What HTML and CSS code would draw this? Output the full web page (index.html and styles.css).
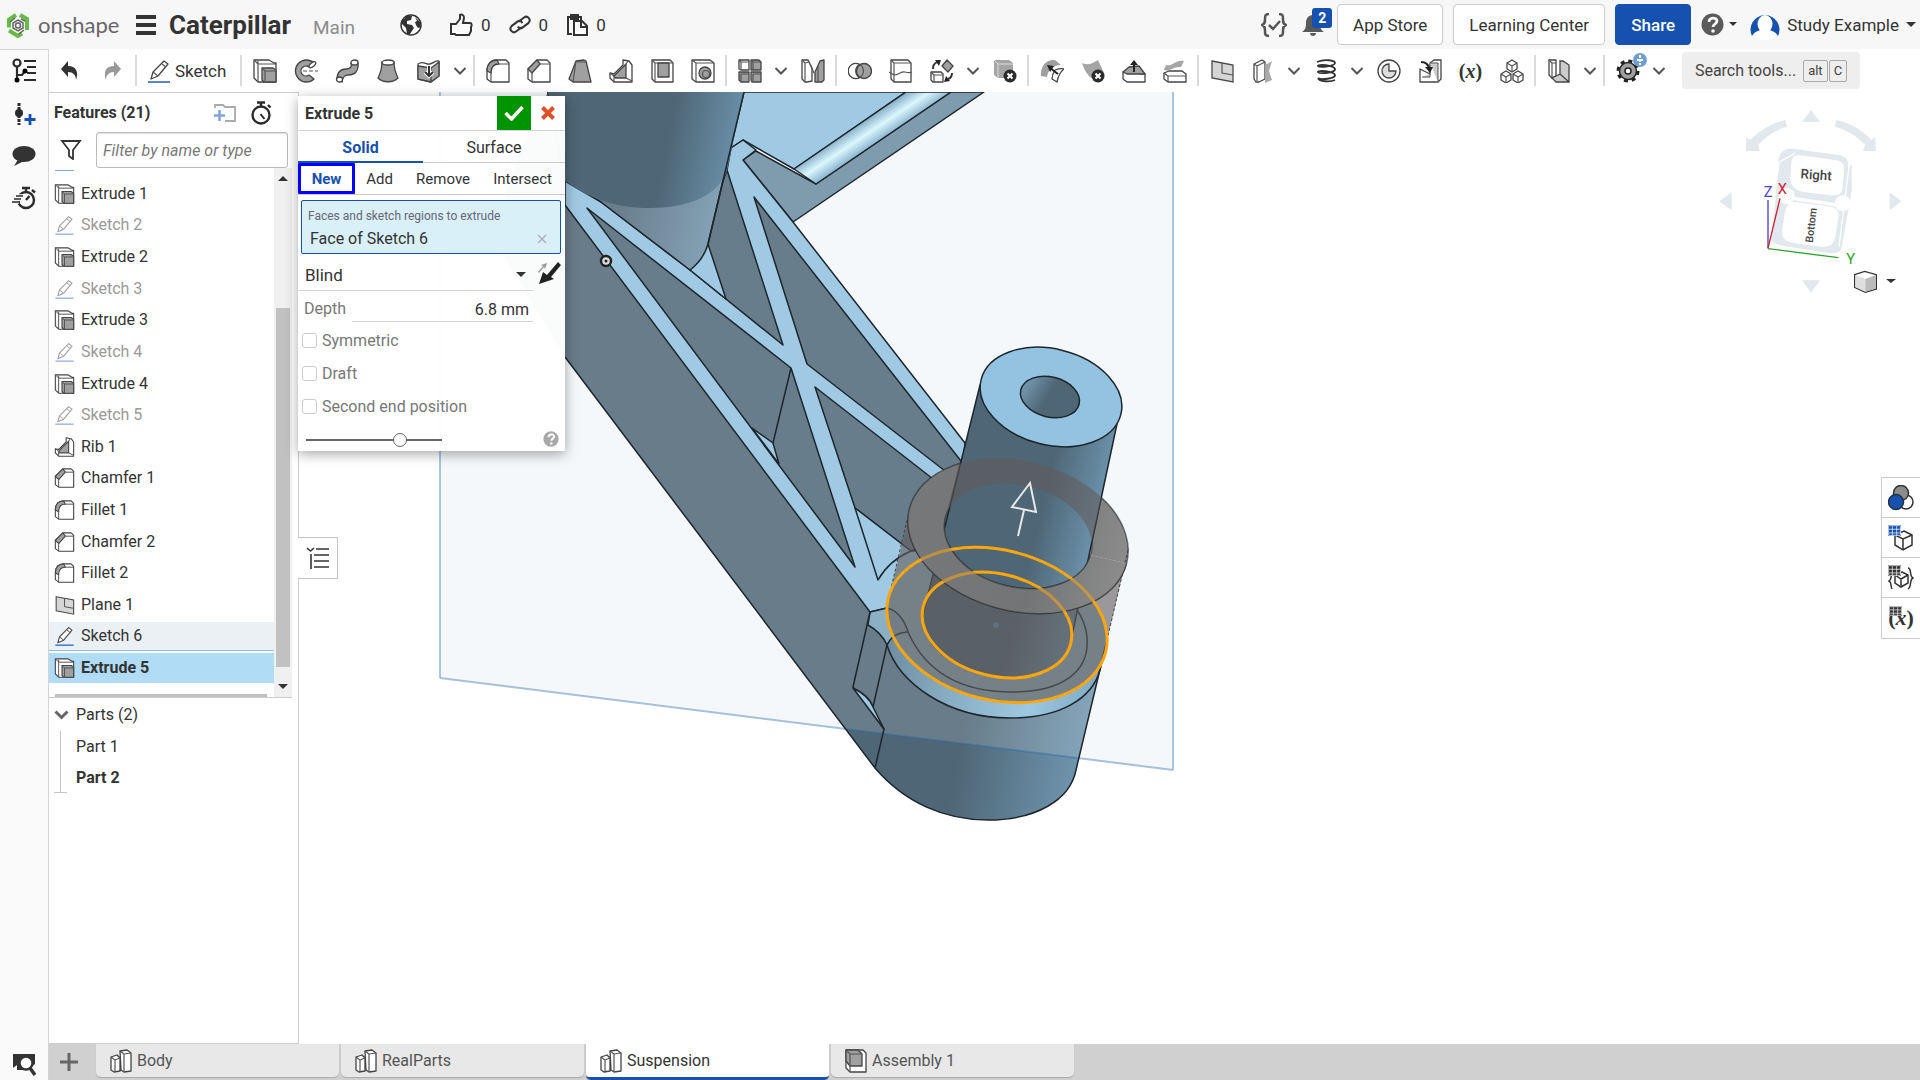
FILE: index.html
```html
<!DOCTYPE html>
<html lang="en">
<head>
<meta charset="utf-8">
<title>Caterpillar | Suspension</title>
<meta name="viewport" content="width=device-width, initial-scale=1">
<link rel="stylesheet" href="styles.css">
</head>
<body>
<svg class="sprite" aria-hidden="true">
  <symbol id="i-extrude" viewBox="0 0 24 24"><path class="w" d="M1 1h15l5 3h2v19H5l-4-4z"/><path class="l" d="M1 1l4 4v18M5 5h18M5 5V2"/><path class="g" d="M9 9h11l3 2v12H11l-2-2z"/><path class="l" d="M9 9l3 3h11M12 12v11"/></symbol>
  <symbol id="i-sketch" viewBox="0 0 24 24"><path class="w" d="M4 20l2-7L17 2l4 3L11 17z"/><path class="l" d="M6 13l5 4M15 5l4 3"/><path d="M1 23h22" stroke="#2f66c0" stroke-width="1.6"/></symbol>
  <symbol id="i-fillet" viewBox="0 0 24 24"><path class="w" d="M1 12C1 5 5 1 11 1h9l3 3v19H5l-4-3z"/><path class="g" d="M1 12C1 5 5 1 11 1l2 4c-5 0-8 3-8 9z"/><path class="l" d="M13 5h10M5 13v10"/></symbol>
  <symbol id="i-chamfer" viewBox="0 0 24 24"><path class="w" d="M1 10l9-9h10l3 3v19H5l-4-3z"/><path class="g" d="M1 10l9-9 3 4-8 9z"/><path class="l" d="M13 5h10M5 13v10"/></symbol>
  <symbol id="i-draft" viewBox="0 0 24 24"><path class="g" d="M8 2l8-1 2 1 5 21H5l-4-3z"/><path class="l" d="M8 2L5 23M8 2l2 1h8"/></symbol>
  <symbol id="i-rib" viewBox="0 0 24 24"><path class="w" d="M14 1l6 1 3 4v17H5l-4-4v-5l4 1 9-9z"/><path class="g" d="M5 17L17 5v14H6z"/><path class="l" d="M1 14l4 3v6M17 5l2-3M17 19l6 3"/></symbol>
  <symbol id="i-plane" viewBox="0 0 24 24"><path d="M2 2l21 4v17L2 19z" fill="#d6d6d6" stroke="#4a4a4a" stroke-width="1.3"/><path class="l" d="M12 4v10l11 2"/></symbol>
  <symbol id="i-shell" viewBox="0 0 24 24"><path class="w" d="M2 1h18l3 3v19H5l-3-3z"/><path class="l" d="M2 1l3 3v19M5 4h18"/><path class="g" d="M8 4h11v14H8z"/></symbol>
  <symbol id="i-hole" viewBox="0 0 24 24"><path class="w" d="M1 1h18l4 3v19H5l-4-3z"/><path class="l" d="M1 1l4 3v19M5 4h18"/><circle class="g" cx="14" cy="14" r="6"/><circle class="l" cx="15" cy="15" r="3.5"/></symbol>
  <symbol id="i-revolve" viewBox="0 0 24 24"><path class="g" d="M20 4A11 11 0 1 0 20 20l-5-4a5 5 0 1 1 0-8z"/><ellipse class="w" cx="18" cy="5.500" rx="2" ry="4" transform="rotate(50 18 6)"/><path d="M9 12h15" class="l" stroke-dasharray="4 2"/></symbol>
  <symbol id="i-sweep" viewBox="0 0 24 24"><path class="g" d="M16 4c1 4-1 6-5 6-6 0-9 4-9 11l5 2c1-6 3-7 6-7 7 0 11-4 10-12z"/><ellipse class="w" cx="19.500" cy="3.500" rx="3.500" ry="2.500"/><ellipse class="w" cx="4.500" cy="20.500" rx="3" ry="2.500"/></symbol>
  <symbol id="i-loft" viewBox="0 0 24 24"><path class="g" d="M6 3c0 7-2 12-4 16 5 5 15 5 20 0-2-4-4-9-4-16z"/><ellipse class="w" cx="12" cy="3.500" rx="6" ry="2.500"/></symbol>
  <symbol id="i-thicken" viewBox="0 0 24 24"><path class="w" d="M1 5c5-4 8 1 12 0s6-4 9-3v15l-8 6-13-3z"/><path class="g" d="M1 7l13 2v14L1 20zM14 9l8-6v14l-8 6z"/><path d="M12 7v9m-4-3l4 4 4-4" stroke="#fff" stroke-width="4" fill="none"/><path d="M12 7v9m-4-3l4 4 4-4" stroke="#333" stroke-width="2" fill="none"/></symbol>
  <symbol id="i-pattern" viewBox="0 0 24 24"><path class="w" d="M1 1h10v10H3l-2-1z"/><path class="g" d="M13 1h8l2 2v8H13zM1 13h10v10H3l-2-2zM13 13h10v10H14l-1-2z"/><path class="l" d="M1 1l2 2v8M3 3h8M13 1l2 2v8M15 3h8M3 15h8M3 15v8M15 15h8M15 15v8"/></symbol>
  <symbol id="i-mirror" viewBox="0 0 24 24"><path class="w" d="M1 1h6l4 8v13l-5 1H4l-3-3z"/><path class="l" d="M1 1l3 3v19M4 4l4-1M9 5l4 9"/><path class="g" d="M14 13l5-11 4-1v20l-2 2h-7z"/><path class="l" d="M17 7v16"/></symbol>
  <symbol id="i-boolean" viewBox="0 0 24 24"><circle class="g" cx="16" cy="12" r="7.500"/><circle class="l" cx="8" cy="12" r="7.500"/><path class="w" d="M11.500 5.500A7.500 7.500 0 0 0 11.500 18.500 7.500 7.500 0 1 1 11.500 5.500z"/></symbol>
  <symbol id="i-split" viewBox="0 0 24 24"><path class="w" d="M2 1h17l3 3v19H5l-3-3z"/><path class="l" d="M2 1l3 3v19M5 4h17M0 13l5 3c5 0 7-4 11-3s5 1 7 0"/></symbol>
  <symbol id="i-transform" viewBox="0 0 24 24"><path class="w" d="M1 13h10l2 2v8H3l-2-2z"/><path class="l" d="M1 13l3 3v7M4 16h9"/><path class="g" d="M17 1l6 6-5 6-6-6z"/><path d="M3 10c0-4 1-5 4-7" stroke="#333" stroke-width="2" fill="none"/><path d="M5 1h6L9 7zM14 23l2-6 4 5z" fill="#222"/><path d="M18 20c3-1 4-3 4-6" stroke="#333" stroke-width="2" fill="none"/></symbol>
  <symbol id="i-delpart" viewBox="0 0 24 24"><path d="M1 1h15l4 3v15H5l-4-3z" fill="#a5a5a5"/><path d="M1 1l4 4v14M5 5h15" stroke="#ddd" fill="none"/><circle cx="17" cy="17" r="6.500" fill="#2b2b2b"/><path d="M14.500 14.500l5 5m0-5l-5 5" stroke="#fff" stroke-width="2"/></symbol>
  <symbol id="i-modfillet" viewBox="0 0 24 24"><path d="M1 17C0 8 6 0 15 1l6 5C13 6 8 11 7 18z" fill="#a0a0a0"/><path class="w" d="M15 11c3-1 6-2 9-1-4 3-6 8-7 13l-5-3c0-4 1-6 3-9z"/><path d="M18 15l-8-6" stroke="#222" stroke-width="2" fill="none"/><path d="M7 6l7 1-4 6z" fill="#222"/></symbol>
  <symbol id="i-delface" viewBox="0 0 24 24"><path d="M1 4c6 3 11 0 16-3l6 13-8 5C8 21 4 12 1 4z" fill="#a5a5a5"/><circle cx="17" cy="17" r="6.500" fill="#2b2b2b"/><path d="M14.500 14.500l5 5m0-5l-5 5" stroke="#fff" stroke-width="2"/></symbol>
  <symbol id="i-moveface" viewBox="0 0 24 24"><path class="w" d="M1 13l22 2v8H5l-4-3z"/><path class="g" d="M1 13l6-5 10-1 6 8H5z"/><path d="M12 13V4" stroke="#222" stroke-width="2" fill="none"/><path d="M8 6l4-5 4 5z" fill="#222"/></symbol>
  <symbol id="i-replace" viewBox="0 0 24 24"><path d="M3 6c6 2 10-6 18-4l-3 6c-7-1-12 5-17 3z" fill="#a5a5a5"/><path class="w" d="M1 14l5-2h13l4 3v8H5l-4-3z"/><path class="l" d="M1 14l4 3v6M5 17h18"/></symbol>
  <symbol id="i-surface" viewBox="0 0 24 24"><path class="w" d="M3 5l8-4 3 2v17l-6 3H5l-2-3z"/><path class="l" d="M3 5l3 2v15M6 7l8-4"/><path d="M14 6l7-4-3 10 3 9-7 3z" fill="#aaa"/></symbol>
  <symbol id="i-helix" viewBox="0 0 24 24"><path d="M3 3c7-3 18-2 18 1S6 9 4 7c-1-2 16-1 17 3S6 15 4 13c-1-2 16-1 17 3S6 21 4 19M4 19c1 4 13 4 17 2" fill="none" stroke="#333" stroke-width="1.800"/></symbol>
  <symbol id="i-curve" viewBox="0 0 24 24"><circle class="w" cx="12" cy="12" r="11"/><path d="M12 5v7h7a7 7 0 1 1-7-7z" fill="#ddd" stroke="#444" stroke-width="1.300"/></symbol>
  <symbol id="i-derive" viewBox="0 0 24 24"><path class="w" d="M2 10l10 5V4l4-3h7v19l-3 3H2z"/><path d="M12 4h8v19M4 18h8v-3" fill="#ccc" stroke="#555"/><path d="M3 3c4 0 7 2 8 6" stroke="#222" stroke-width="2.200" fill="none"/><path d="M7 8h8l-3 6z" fill="#222"/></symbol>
  <symbol id="i-cubes" viewBox="0 0 24 24"><path class="w" d="M12 1l5 3v6l-5 3-5-3V4zM6 12l5 3v6l-5 3-5-3v-6zM18 12l5 3v6l-5 3-5-3v-6z"/><path class="l" d="M7 4l5 3 5-3M12 7v6M1 15l5 3 5-3M6 18v6M13 15l5 3 5-3M18 18v6"/></symbol>
  <symbol id="i-section" viewBox="0 0 24 24"><path class="w" d="M2 1h7v16l-4 2-3-3z"/><path class="l" d="M2 1l3 3v15M5 4h4"/><path d="M9 17l4-2V2h3l6 4v17H9l-4-4zM13 15l9 8" fill="#ccc" stroke="#444" stroke-width="1.300"/></symbol>
  <symbol id="i-gear" viewBox="0 0 24 24"><circle cx="12" cy="12" r="9.500" fill="none" stroke="#222" stroke-width="4" stroke-dasharray="3.800 3.660"/><circle cx="12" cy="12" r="8.500" fill="#a0a0a0" stroke="#222" stroke-width="1.500"/><circle cx="12" cy="12" r="3" fill="#fff" stroke="#222" stroke-width="1.500"/></symbol>
  <symbol id="i-chev" viewBox="0 0 14 10"><path d="M1.500 2l5.500 5.500L12.500 2" fill="none" stroke="#555" stroke-width="2"/></symbol>
  <symbol id="i-caret" viewBox="0 0 10 6"><path d="M0 0h10L5 5z" fill="#333"/></symbol>
  <symbol id="i-watch" viewBox="0 0 24 24"><circle cx="12" cy="14" r="8.500" fill="none" stroke="#2b2b2b" stroke-width="2.400"/><path d="M8 1.500h8M12 2v4M19 4l2.500 2.500" stroke="#2b2b2b" stroke-width="2.400"/><path d="M11.500 13l4 5" stroke="#2b2b2b" stroke-width="2"/></symbol>
  <symbol id="i-part" viewBox="0 0 22 24"><path class="w" d="M1 8l6-2 3 3v13l-6 1-3-2zM10 2l7-1 4 3v18l-7 1-3-2z"/><path class="l" d="M1 8l4 3v12M5 11l5-2M10 2l4 3v18M14 5l7-1"/></symbol>
  <symbol id="i-assembly" viewBox="0 0 22 24"><path class="w" d="M1 1h17l3 3v19H5l-4-4z"/><path class="g" d="M1 1h12l4 4v12H5l-4-5z"/><path class="l" d="M1 1l4 4h12M5 5v18"/></symbol>
  <symbol id="i-grid" viewBox="0 0 12 9"><path d="M0 0h12v9H0z"/><path d="M4 1v8M8 1v8M1 3.500h11M1 6.500h11M.5.500h11v8H.5z" stroke="#fff" stroke-width=".8" stroke-opacity=".75" fill="none"/></symbol>
</svg>

<header class="topbar">
  <a class="logo" href="#" aria-label="Onshape home">
    <svg width="24" height="26" viewBox="0 0 24 26"><g fill="none" stroke="#64bc46" stroke-width="4"><path d="M10 3L3 7.500v8M3 18.500L12 24l4-2.500M14 3l7 4v11"/></g><path d="M12 8l5 3v5l-5 3-5-3v-5zM4 10l5-4M15 7l4 2M18 18l-5 4" fill="none" stroke="#666" stroke-width="1.500"/><circle cx="12" cy="13.500" r="2.500" fill="none" stroke="#666" stroke-width="1.500"/></svg>
    <span>onshape</span>
  </a>
  <button class="menu" aria-label="Menu"><i></i><i></i><i></i></button>
  <h1>Caterpillar</h1>
  <span class="branch">Main</span>
  <svg class="globe" width="22" height="22" viewBox="0 0 22 22"><circle cx="11" cy="11" r="10" fill="#fff" stroke="#333" stroke-width="1.500"/><path d="M2 7l5-5 5 0-1 4-4 1 0 3 5 1 2 3-4 6-3 0-1-6-4-4zM15 3l5 5 1 5-3 1-2-3-1-3 2-1z" fill="#333"/></svg>
  <button class="stat thumb"><svg width="24" height="24" viewBox="0 0 24 24"><path d="M2 11h5l4-5V2c2-1 4 0 4 3l-1 5h7c2 0 2 3 1 4v4l-2 4H7l-1-1H2z" fill="#fff" stroke="#333" stroke-width="2"/></svg>0</button>
  <button class="stat link"><svg width="22" height="24" viewBox="0 0 22 24"><g fill="none" stroke="#333" stroke-width="2" transform="rotate(8 11 12)"><path d="M9 9l5-5c3-3 8 1 5 5l-5 5c-2 2-4 1-5 0"/><path d="M13 14l-5 5c-3 3-8-1-5-5l5-5c2-2 4-1 5 1"/></g></svg>0</button>
  <button class="stat"><svg width="22" height="24" viewBox="0 0 22 24"><path d="M6 21H2V4h13v3M5 2h7v4H5z" fill="none" stroke="#333" stroke-width="2"/><path d="M8 8h8l5 5v9H8z" fill="#fff" stroke="#333" stroke-width="2"/><path d="M15 8v6h6" fill="none" stroke="#333" stroke-width="2"/></svg>0</button>
  <div class="topright">
    <svg class="braces" width="26" height="24" viewBox="0 0 26 24"><path d="M8 1C4 1 4 3 4 6s0 5-3 6c3 1 3 3 3 6s0 5 4 5M18 1c4 0 4 2 4 5s0 5 3 6c-3 1-3 3-3 6s0 5-4 5M8 12l4 4 7-8" fill="none" stroke="#555" stroke-width="2.500"/></svg>
    <button class="bell" aria-label="Notifications"><svg width="22" height="26" viewBox="0 0 22 26"><path d="M11 3c5 0 7 4 7 8 0 5 1 7 4 9H0c3-2 4-4 4-9 0-4 2-8 7-8zM8 21h6c0 4-6 4-6 0z" fill="#5a5a5a"/></svg><b>2</b></button>
    <button class="btn store">App Store</button>
    <button class="btn learn">Learning Center</button>
    <button class="btn share">Share</button>
    <button class="help" aria-label="Help"><svg width="23" height="23" viewBox="0 0 23 23"><circle cx="11.500" cy="11.500" r="11" fill="#5a5a5a"/><path d="M8 9c0-5 8-5 8-1 0 3-4 3-4 6" fill="none" stroke="#f7f7f7" stroke-width="2.800"/><circle cx="12" cy="18" r="1.800" fill="#f7f7f7"/></svg><svg class="caret" width="8" height="5"><use href="#i-caret"/></svg></button>
    <button class="user"><svg width="30" height="30" viewBox="0 0 30 30"><path d="M2 26A14.500 14.500 0 1 1 28 26c-2-4-6-5-8-6H10c-2 1-6 2-8 6z" fill="#1651b0"/><ellipse cx="15" cy="14" rx="7.500" ry="9" fill="#fff"/><path d="M4 28c1-5 5-6 8-7h6c3 1 7 2 8 7-6 3-16 3-22 0z" fill="#fff"/></svg>Study Example<svg class="caret" width="10" height="6"><use href="#i-caret"/></svg></button>
  </div>
</header>

<div class="app">
  <nav class="rail">
    <svg width="26" height="26" viewBox="0 0 26 26"><g fill="none" stroke="#2b2b2b" stroke-width="2.200"><circle cx="6" cy="5" r="3.500"/><path d="M6 9v14M6 17h5l3-4M13 3h12M16 9h9M16 15h9M13 22h12"/></g><circle cx="6" cy="22" r="2.500"/><circle cx="14" cy="13" r="2.500"/></svg>
    <svg width="24" height="24" viewBox="0 0 24 24"><path d="M7 1v22" stroke="#2b2b2b" stroke-width="3" stroke-dasharray="3 1"/><circle cx="7" cy="11" r="4" fill="#2b2b2b"/><path d="M18 12v11M12.500 17.500h11" stroke="#1651b0" stroke-width="2.800"/></svg>
    <svg width="24" height="24" viewBox="0 0 24 24"><ellipse cx="12" cy="10" rx="11.500" ry="8" fill="#333"/><path d="M7 14l-5 8 10-5z" fill="#333"/></svg>
    <svg width="24" height="24" viewBox="0 0 24 24"><circle cx="14" cy="14" r="8" fill="none" stroke="#2b2b2b" stroke-width="2.400"/><path d="M10 2h8M14 2v4M20 4l3 2.500M14 14l3.500-4" stroke="#2b2b2b" stroke-width="2.400"/><path d="M3 10h8M1 13h8M0 16h7" stroke="#fafafa" stroke-width="3.500"/><path d="M4 10h7M2 13h7M0 16h8" stroke="#2b2b2b" stroke-width="1.500"/></svg>
    <svg class="bottom" width="24" height="24" viewBox="0 0 24 24"><path d="M1 2h22v10l-8 6H4l-3-2z" fill="#333"/><circle cx="14" cy="11" r="6.500" fill="#fff" stroke="#333" stroke-width="2.400"/><path d="M1 16l4-3v5H1z" fill="#fafafa"/><path d="M18 16l5 7" stroke="#333" stroke-width="3.500"/></svg>
  </nav>

  <div class="work">
    <div class="toolbar">
      <button class="undo" aria-label="Undo"><svg viewBox="0 0 24 24"><path d="M10 2v5c8 0 11 6 8 14 0-5-3-8-8-8v5L3 10z" fill="#333"/></svg></button>
      <button class="undo" aria-label="Redo"><svg viewBox="0 0 24 24"><path d="M14 2v5C6 7 3 13 6 21c0-5 3-8 8-8v5l7-8z" fill="#999"/></svg></button>
      <i class="sep"></i>
      <button class="sketch"><svg><use href="#i-sketch"/></svg>Sketch</button>
      <i class="sep"></i>
      <button><svg><use href="#i-extrude"/></svg></button>
      <button><svg><use href="#i-revolve"/></svg></button>
      <button><svg><use href="#i-sweep"/></svg></button>
      <button><svg><use href="#i-loft"/></svg></button>
      <button><svg><use href="#i-thicken"/></svg></button>
      <button class="more"><svg><use href="#i-chev"/></svg></button>
      <i class="sep"></i>
      <button><svg><use href="#i-fillet"/></svg></button>
      <button><svg><use href="#i-chamfer"/></svg></button>
      <button><svg><use href="#i-draft"/></svg></button>
      <button><svg><use href="#i-rib"/></svg></button>
      <button><svg><use href="#i-shell"/></svg></button>
      <button><svg><use href="#i-hole"/></svg></button>
      <i class="sep"></i>
      <button><svg><use href="#i-pattern"/></svg></button>
      <button class="more"><svg><use href="#i-chev"/></svg></button>
      <button><svg><use href="#i-mirror"/></svg></button>
      <i class="sep"></i>
      <button><svg><use href="#i-boolean"/></svg></button>
      <button><svg><use href="#i-split"/></svg></button>
      <button><svg><use href="#i-transform"/></svg></button>
      <button class="more"><svg><use href="#i-chev"/></svg></button>
      <button><svg><use href="#i-delpart"/></svg></button>
      <i class="sep"></i>
      <button><svg><use href="#i-modfillet"/></svg></button>
      <button><svg><use href="#i-delface"/></svg></button>
      <button><svg><use href="#i-moveface"/></svg></button>
      <button><svg><use href="#i-replace"/></svg></button>
      <i class="sep"></i>
      <button><svg><use href="#i-plane"/></svg></button>
      <button><svg><use href="#i-surface"/></svg></button>
      <button class="more"><svg><use href="#i-chev"/></svg></button>
      <button><svg><use href="#i-helix"/></svg></button>
      <button class="more"><svg><use href="#i-chev"/></svg></button>
      <button><svg><use href="#i-curve"/></svg></button>
      <button><svg><use href="#i-derive"/></svg></button>
      <button class="var">(<em>x</em>)</button>
      <button><svg><use href="#i-cubes"/></svg></button>
      <i class="sep"></i>
      <button><svg><use href="#i-section"/></svg></button>
      <button class="more"><svg><use href="#i-chev"/></svg></button>
      <i class="sep"></i>
      <button class="gear"><svg><use href="#i-gear"/></svg><svg class="plus" viewBox="0 0 14 14"><circle cx="7" cy="7" r="7" fill="#6f9fd0"/><path d="M7 2v10M4 7h6" stroke="#fff" stroke-width="2" stroke-dasharray="3 1"/></svg></button>
      <button class="more"><svg><use href="#i-chev"/></svg></button>
      <button class="search">Search tools...<kbd>alt</kbd><kbd>C</kbd></button>
    </div>

    <div class="stage">
      <aside class="panel">
        <div class="phead"><h2>Features (21)</h2>
          <svg width="24" height="20" viewBox="0 0 24 20"><path d="M2 5V2h8l2 2h10v14H12" fill="none" stroke="#aaa" stroke-width="1.800"/><path d="M6.500 7v11M1 12.500h11" stroke="#7fa3dc" stroke-width="2.500"/></svg>
          <svg width="24" height="24"><use href="#i-watch"/></svg>
        </div>
        <div class="filter"><svg width="22" height="20" viewBox="0 0 22 20"><path d="M2 1h18l-7 9v9l-4-3v-6z" fill="none" stroke="#333" stroke-width="1.800"/></svg><input type="text" placeholder="Filter by name or type" aria-label="Filter by name or type"></div>
        <div class="scroller">
          <div class="flist">
            <div class="peek"></div>
            <ul>
              <li><svg><use href="#i-extrude"/></svg>Extrude 1</li>
              <li class="dim"><svg><use href="#i-sketch"/></svg>Sketch 2</li>
              <li><svg><use href="#i-extrude"/></svg>Extrude 2</li>
              <li class="dim"><svg><use href="#i-sketch"/></svg>Sketch 3</li>
              <li><svg><use href="#i-extrude"/></svg>Extrude 3</li>
              <li class="dim"><svg><use href="#i-sketch"/></svg>Sketch 4</li>
              <li><svg><use href="#i-extrude"/></svg>Extrude 4</li>
              <li class="dim"><svg><use href="#i-sketch"/></svg>Sketch 5</li>
              <li><svg><use href="#i-rib"/></svg>Rib 1</li>
              <li><svg><use href="#i-chamfer"/></svg>Chamfer 1</li>
              <li><svg><use href="#i-fillet"/></svg>Fillet 1</li>
              <li><svg><use href="#i-chamfer"/></svg>Chamfer 2</li>
              <li><svg><use href="#i-fillet"/></svg>Fillet 2</li>
              <li><svg><use href="#i-plane"/></svg>Plane 1</li>
              <li class="used"><svg><use href="#i-sketch"/></svg>Sketch 6</li>
              <li class="current"><svg><use href="#i-extrude"/></svg>Extrude 5</li>
            </ul>
            <div class="rollback"></div>
          </div>
          <div class="scrollbar"><svg class="up" width="10" height="6"><use href="#i-caret"/></svg><i></i><svg width="10" height="6"><use href="#i-caret"/></svg></div>
        </div>
        <div class="parts">
          <h3><svg width="15" height="10" viewBox="0 0 15 10"><path d="M1.500 1.500l6 6 6-6" fill="none" stroke="#666" stroke-width="3"/></svg>Parts (2)</h3>
          <ul><li>Part 1</li><li class="on">Part 2</li></ul>
        </div>
      </aside>

      <main class="canvas">
        <svg class="model" viewBox="299 92 1621 952" preserveAspectRatio="xMinYMin slice" role="img" aria-label="3D model">
          <defs>
            <linearGradient id="cylTop" gradientUnits="userSpaceOnUse" x1="620" y1="140" x2="750" y2="165"><stop offset="0" stop-color="#4e6675"/><stop offset=".35" stop-color="#4e6675"/><stop offset="1" stop-color="#7099b4"/></linearGradient>
            <linearGradient id="cylTopLow" gradientUnits="userSpaceOnUse" x1="620" y1="210" x2="720" y2="235"><stop offset="0" stop-color="#6a7f8d"/><stop offset="1" stop-color="#86a4b9"/></linearGradient>
            <linearGradient id="groove" gradientUnits="userSpaceOnUse" x1="850" y1="130" x2="864" y2="151"><stop offset="0" stop-color="#86b0c9"/><stop offset=".5" stop-color="#dbf6fe"/><stop offset="1" stop-color="#8db6cf"/></linearGradient>
            <linearGradient id="boss" gradientUnits="userSpaceOnUse" x1="960" y1="740" x2="1095" y2="765"><stop offset="0" stop-color="#4e6675"/><stop offset="1" stop-color="#739ab5"/></linearGradient>
            <linearGradient id="pin" gradientUnits="userSpaceOnUse" x1="1020" y1="470" x2="1115" y2="492"><stop offset="0" stop-color="#4e6675"/><stop offset=".3" stop-color="#4e6675"/><stop offset="1" stop-color="#7099b4"/></linearGradient>
            <linearGradient id="hole" x1="0" y1="0" x2="1" y2=".2"><stop offset="0" stop-color="#7ba1ba"/><stop offset=".55" stop-color="#4e6675"/><stop offset="1" stop-color="#4e6675"/></linearGradient>
            <linearGradient id="rim" gradientUnits="userSpaceOnUse" x1="890" y1="640" x2="1100" y2="690"><stop offset="0" stop-color="#6f8d9f"/><stop offset=".3" stop-color="#86abc1"/><stop offset=".7" stop-color="#9dc8e2"/><stop offset="1" stop-color="#7fa7c0"/></linearGradient>
            <linearGradient id="ring" gradientUnits="userSpaceOnUse" x1="906" y1="0" x2="1130" y2="0"><stop offset="0" stop-color="#77787a"/><stop offset=".6" stop-color="#727476"/><stop offset="1" stop-color="#8c8c8b"/></linearGradient>
            <clipPath id="back"><path d="M880 400h280v171L880 507z"/></clipPath>
            <clipPath id="front"><path d="M880 507l280 64v80H880z"/></clipPath>
            <clipPath id="inPlane"><path d="M440 92h733v678L440 678z"/></clipPath>
            <clipPath id="pinClip"><path d="M980 385l-36 137 145 33 34-150z"/></clipPath>
            <mask id="wall"><ellipse cx="997" cy="625" rx="112" ry="75" transform="rotate(14 997 625)" fill="#fff"/><path d="M886 610l22-90 221 28-22 92z" fill="#fff"/><ellipse cx="1018" cy="536" rx="112" ry="75" transform="rotate(14 1018 536)" fill="#000"/></mask>
          </defs>
          <path d="M440 80h733v690L440 678z" fill="#f4f8fb"/>
          <!-- arm side face and boss -->
          <g id="solid">
            <path d="M548 92C520 150 494 210 500 250L565 357 875 768 886 726 887 608 870 612 565 205 560 92z" fill="#4e6675"/>
            <path d="M870 612l-17 75 31 42-9 39c30 35 70 52 113 52 48 0 80-20 88-50l31-130-120-90-100 60z" fill="url(#boss)"/>
          </g>
          <g clip-path="url(#inPlane)"><path d="M548 92C520 150 494 210 500 250L565 357 875 768c30 35 70 52 113 52 48 0 80-20 88-50l31-130-120-90-117 62L565 205V92z" fill="#fff" fill-opacity=".15"/></g>
          <path d="M440 678l733 92" stroke="#2b66a8" stroke-opacity=".4" stroke-width="2" fill="none"/>
          <path d="M440 80v598M1173 80v690" stroke="#7fa8d8" stroke-opacity=".65" stroke-width="2" fill="none"/>
          <g stroke="#1d262c" stroke-width="1.500" stroke-linejoin="round">
            <!-- top plate -->
            <path d="M548 92h358l-112 77-51-29-12 8-20 60H601L565 181z" fill="#a0c9e3"/>
            <path d="M816 184l135-92h33l-191 130-50-62 13-9z" fill="#7f9bae"/>
            <path d="M906 92h45l-135 92-22-15z" fill="url(#groove)"/>
            <!-- truss face -->
            <path d="M565 175l36 27 89 68 18-26 19-74 4-22 12-8 13 10-13 10 50 62 172 221-5 60-20 80-53 25-17 4L565 205z" fill="#a0c9e3"/>
            <g fill="#687d8b">
              <path d="M587 208l204 160 64 199z"/>
              <path d="M727 170l56 175-93-75z"/>
              <path d="M754 197l207 264-3 20-151-117z"/>
              <path d="M815 387l145 113v50l-49 1-56-43z"/>
            </g>
            <path d="M708 244l18 55-36-29z" fill="#a0c9e3"/>
            <path d="M752 428l21 15 6 21zM773 443l18-75" fill="#a0c9e3"/>
            <path d="M855 508l56 43c-14 6-25 15-33 29z" fill="#a0c9e3"/>
            <path d="M911 551c10-5 18-7 30-8" fill="none"/>
            <!-- large upper cylinder -->
            <path d="M548 92h196l-36 152c-3 11-9 19-18 26L601 202 565 181z" fill="url(#cylTopLow)"/>
            <path d="M548 92h196l-17 78c-8 26-40 38-77 38-35 0-62-10-85-27z" fill="url(#cylTop)" stroke="none"/>
            <path d="M744 92l-36 152" fill="none"/>
            <!-- boss rim and edges -->
            <path d="M887 645c12 38 60 73 123 73 50 0 82-19 90-48l7-30-10-30-190-20z" fill="url(#rim)"/>
            <ellipse cx="997" cy="625" rx="111" ry="75" transform="rotate(14 997 625)" fill="#94b7cb" stroke="none"/>
            <path d="M870 612l17-4c12 3 18 14 21 24-12 1-17 5-21 13-4-9-10-15-19-20z" fill="#8bb0c6"/>
            <path d="M908 632c20 45 60 60 104 60 50 0 78-20 75-55-1-12-5-20-11-29" fill="none"/>
            <path d="M870 612l-17 75 31 42-9 39M887 645l-14 62M565 357l310 411c30 35 70 52 113 52 48 0 82-20 88-50l31-130" fill="none"/>
            <path d="M853 688c10 5 17 10 20 19l11 22z" fill="#a0c9e3"/>
            <!-- extrude preview, behind the pin -->
            <g clip-path="url(#back)"><path fill-rule="evenodd" transform="rotate(14 1018 536)" d="M906 536a112 75 0 1 1 224 0 112 75 0 1 1-224 0zM943 536a75 51 0 1 0 150 0 75 51 0 1 0-150 0z" fill="url(#ring)" stroke-opacity=".6"/></g>
            <path d="M980 385l-57 230c0 45 60 65 92 63 32-2 50-15 55-33l51-240z" fill="url(#pin)"/>
            <g clip-path="url(#pinClip)"><path fill-rule="evenodd" transform="rotate(14 1018 536)" d="M906 536a112 75 0 1 1 224 0 112 75 0 1 1-224 0zM943 536a75 51 0 1 0 150 0 75 51 0 1 0-150 0z" fill="#625a57" fill-opacity=".55" stroke="none"/></g>
            <ellipse cx="1051" cy="397" rx="72" ry="48" transform="rotate(14 1051 397)" fill="#94c3e1"/>
            <ellipse cx="1050" cy="397" rx="30" ry="20" transform="rotate(14 1050 397)" fill="url(#hole)"/>
          </g>
          <g mask="url(#wall)"><path d="M870 450h270v270H870z" fill="#625e5d" fill-opacity=".62"/></g>
          <path d="M907 520l-21 90M1128 550l-21 90" stroke="#444" stroke-dasharray="3 2" fill="none"/>
          <g clip-path="url(#front)"><path fill-rule="evenodd" transform="rotate(14 1018 536)" d="M906 536a112 75 0 1 1 224 0 112 75 0 1 1-224 0zM943 536a75 51 0 1 0 150 0 75 51 0 1 0-150 0z" fill="url(#ring)" stroke="#333" stroke-width="1.500"/></g>
          <g fill="none" stroke="#ffa60d" stroke-width="3"><ellipse cx="997" cy="625" rx="112" ry="75" transform="rotate(14 997 625)"/><ellipse cx="997" cy="625" rx="76" ry="51" transform="rotate(14 997 625)"/></g>
          <g clip-path="url(#front)"><path fill-rule="evenodd" transform="rotate(14 1018 536)" d="M906 536a112 75 0 1 1 224 0 112 75 0 1 1-224 0zM943 536a75 51 0 1 0 150 0 75 51 0 1 0-150 0z" fill="url(#ring)" fill-opacity=".45"/></g>
          <circle cx="996" cy="625" r="3" fill="#60707c"/>
          <path d="M1030 483l-18 24 24 5zM1024 510l-6 26" fill="none" stroke="#e8e8e8" stroke-width="2"/>
          <circle cx="606" cy="261" r="5" fill="#ddd" stroke="#222" stroke-width="2.500"/><circle cx="606" cy="261" r="1.500" fill="#222"/>
        </svg>

        <svg class="viewcube" viewBox="0 0 660 630" role="img" aria-label="View cube">
          <g fill="#e1e8ee"><path d="M333 45l27 36h-54zM58 319l37-27v54zM605 319l-36-27v54zM333 593l27-37h-54z"/><path d="M256 75l5 20c-40 12-60 28-86 54l4 19h-42l2-40 13 6c34-33 64-50 104-59zM409 75l-5 20c42 12 65 28 91 54l-6 19h39l-2-42-12 8c-32-33-64-50-105-59z"/>
          <path d="M235 195c6-30 25-37 50-33l130 18c24 4 32 16 30 38l10-10v80l-30 170c-6 16-20 18-38 16l-130-20c-34-5-48-14-40-44l10-100z"/></g>
          <path d="M238 200l-22 150M447 215l-30 240M240 200l45-25" stroke="#fff" stroke-width="4" fill="none"/>
          <path d="M300 181l105 14c22 3 28 14 27 32l-4 50c-2 20-14 27-34 24l-85-10c-30-8-38-22-38-45l3-42c2-17 10-24 26-23z" fill="#fff"/>
          <path d="M290 321l100 14c24 4 28 14 25 36l-8 50c-4 28-16 36-44 34l-80-10c-30-6-40-18-36-44l8-50c4-22 14-31 35-30z" fill="#fff"/>
          <circle cx="260" cy="303" r="24" fill="#fff"/><circle cx="428" cy="325" r="24" fill="#fff"/><path d="M280 310l130 20" stroke="#fff" stroke-width="10"/>
          <path d="M204 460V315" stroke="#4a3fd0" stroke-width="4"/><path d="M204 460l36-150" stroke="#d02030" stroke-width="4"/><path d="M204 461l211 27" stroke="#2aa52a" stroke-width="4"/>
          <text class="face" x="301" y="250" transform="rotate(4 301 250)">Right</text>
          <text class="face bottom" x="338" y="444" transform="rotate(-83 338 444)">Bottom</text>
          <text class="axis" x="191" y="306" fill="#4a3fd0">Z</text><text class="axis" x="233" y="298" fill="#d02030">X</text><text class="axis" x="439" y="508" fill="#2aa52a">Y</text>
          <path d="M464 539l30-10 35 10v43l-33 10-32-15z" fill="#fff" stroke="#333" stroke-width="4"/><path d="M466 541l30 11v38l-30-13z" fill="#dedede"/><path d="M496 552l31-12v41l-31 9z" fill="#bbb"/><path d="M558 552h30l-15 12z" fill="#333"/>
        </svg>

        <div class="rightdock">
          <button aria-label="Appearance"><svg viewBox="0 0 26 26"><circle cx="18" cy="17" r="7" fill="#fff" stroke="#333" stroke-width="1.500"/><circle cx="13" cy="8" r="7.500" fill="#8c8c8c" stroke="#333" stroke-width="1.500"/><circle cx="8" cy="17" r="7.500" fill="#1651b0" stroke="#234" stroke-width="1.500"/></svg></button>
          <button aria-label="Configurations"><svg viewBox="0 0 26 26"><path d="M16 6l8 4v10l-9 5-8-5V10z" fill="#fff" stroke="#333" stroke-width="1.500"/><path d="M7 10l8 4 9-4M15 14v11" fill="none" stroke="#333" stroke-width="1.500"/><svg width="13" height="11" viewBox="0 0 12 9" preserveAspectRatio="none" fill="#1651b0"><use href="#i-grid"/></svg></svg></button>
          <button aria-label="Properties"><svg viewBox="0 0 26 26"><path d="M14 7l6 3v8l-7 4-6-4v-8z" fill="#fff" stroke="#333" stroke-width="1.500"/><path d="M7 10l6 4 7-4M13 14v8M4 10c-2 2 0 4-3 6 3 1 1 4 3 8M20 3c4 0 1 8 5 10-4 2-1 9-5 11" fill="none" stroke="#333" stroke-width="1.500"/><svg width="13" height="11" viewBox="0 0 12 9" preserveAspectRatio="none" fill="#333"><use href="#i-grid"/></svg></svg></button>
          <button class="var" aria-label="Variables">(<em>x</em>)<svg class="grid" viewBox="0 0 12 9" fill="#333"><use href="#i-grid"/></svg></button>
        </div>

        <button class="treebtn" aria-label="Feature tree"><svg width="24" height="24" viewBox="0 0 24 24"><path d="M1 2l3.500 3L8 2M5 8v15M10 3h13M8 9h15M8 15h15M8 21h15" fill="none" stroke="#333" stroke-width="1.600"/></svg></button>

        <form class="dialog" onsubmit="return false">
          <div class="dhead"><h2>Extrude 5</h2><button class="ok" aria-label="Accept"><svg width="20" height="16" viewBox="0 0 20 16"><path d="M1.500 8l6 6L18.500 2" fill="none" stroke="#fff" stroke-width="3.500"/></svg></button><button class="no" aria-label="Cancel"><svg width="14" height="14" viewBox="0 0 14 14"><path d="M1.500 1.500l11 11m0-11l-11 11" stroke="#de5126" stroke-width="4"/></svg></button></div>
          <div class="tabs"><button class="on">Solid</button><button>Surface</button></div>
          <div class="ops"><button class="on">New</button><button>Add</button><button>Remove</button><button>Intersect</button></div>
          <div class="pick"><small>Faces and sketch regions to extrude</small><div>Face of Sketch 6<svg width="10" height="10" viewBox="0 0 10 10"><path d="M1 1l8 8m0-8L1 9" stroke="#aab" stroke-width="1.200"/></svg></div></div>
          <div class="end"><div class="sel"><select aria-label="End type"><option>Blind</option></select><svg width="10" height="6"><use href="#i-caret"/></svg></div>
            <svg width="24" height="24" viewBox="0 0 24 24"><path d="M2 23L6 11l4 3L21 1l3 3-10 12 3 2z" fill="#222"/><path d="M1 11l5-6-2-1 6-2-2 6-1-2-5 6z" fill="#999"/></svg></div>
          <div class="depth"><label for="depth">Depth</label><input id="depth" type="text" value="6.8 mm"></div>
          <label class="chk"><input type="checkbox">Symmetric</label>
          <label class="chk"><input type="checkbox">Draft</label>
          <label class="chk"><input type="checkbox">Second end position</label>
          <div class="foot"><input type="range" min="0" max="100" value="71" aria-label="Preview opacity"><svg width="16" height="16" viewBox="0 0 23 23"><circle cx="11.500" cy="11.500" r="11" fill="#a8a8a8"/><path d="M8 9c0-5 8-5 8-1 0 3-4 3-4 6" fill="none" stroke="#fff" stroke-width="2.800"/><circle cx="12" cy="18" r="1.800" fill="#fff"/></svg></div>
        </form>
      </main>
    </div>

    <footer class="doctabs">
      <button class="add" aria-label="Add tab"><svg width="18" height="18" viewBox="0 0 18 18"><path d="M9 0v18M0 9h18" stroke="#666" stroke-width="3"/></svg></button>
      <button class="tab"><svg><use href="#i-part"/></svg>Body</button>
      <button class="tab"><svg><use href="#i-part"/></svg>RealParts</button>
      <button class="tab on"><svg><use href="#i-part"/></svg>Suspension</button>
      <button class="tab"><svg><use href="#i-assembly"/></svg>Assembly 1</button>
    </footer>
  </div>
</div>
</body>
</html>
```
FILE: styles.css
```css
* { box-sizing: border-box; }
body { margin: 0; height: 100vh; display: flex; flex-direction: column; font: 16px/20px Roboto, "Liberation Sans", sans-serif; color: #333; background: #fff; overflow: hidden; }
button { font: inherit; color: inherit; background: none; border: 0; padding: 0; display: flex; align-items: center; }
h1, h2, h3, ul { margin: 0; padding: 0; font-size: 16px; list-style: none; }
svg { flex: none; display: block; }
.sprite { position: absolute; width: 0; height: 0; }
.w { fill: #fff; stroke: #444; stroke-width: 1.3px; stroke-linejoin: round; }
.g { fill: #a0a0a0; stroke: #444; stroke-width: 1.3px; stroke-linejoin: round; }
.l { fill: none; stroke: #555; stroke-width: 1.2px; }

/* top bar */
.topbar { height: 49px; flex: none; display: flex; align-items: center; padding: 0 4px 0 6px; background: #f7f7f7; white-space: nowrap; }
.logo { display: flex; align-items: center; gap: 8px; width: 130px; color: #666; text-decoration: none; font: 22px/26px Lato, sans-serif; }
.menu { flex-direction: column; gap: 4px; width: 33px; align-items: flex-start; }
.menu i { width: 20px; height: 4px; background: #333; }
h1 { font-size: 26px; line-height: 32px; width: 144px; }
.branch { font-size: 19px; color: #8c8c8c; width: 87px; padding-top: 7px; }
.globe { margin-right: 27px; }
.stat { gap: 8px; margin-right: 18px; font-size: 17px; }
.topright { margin-left: auto; display: flex; align-items: center; }
.bell { position: relative; margin: 0 13px 0 15px; }
.bell b { position: absolute; left: 10px; top: -4px; width: 20px; height: 20px; border-radius: 3px; background: #1651b0; color: #fff; font-size: 14px; line-height: 20px; text-align: center; }
.btn { height: 41px; justify-content: center; background: #fff; border: 1px solid #ccc; border-radius: 4px; margin-right: 10px; font-size: 17px; }
.store { width: 106px; }
.learn { width: 152px; }
.share { width: 76px; background: #1651b0; border-color: #1651b0; color: #fff; font-weight: 500; }
.help { gap: 5px; margin-right: 13px; }
.user { gap: 7px; font-size: 17px; }

.app { flex: 1; display: flex; min-height: 0; }
.rail { width: 49px; flex: none; display: flex; flex-direction: column; align-items: center; gap: 18px; padding: 8px 0 4px; background: #fafafa; border: solid #d4d4d4; border-width: 1px 1px 0 0; }
.rail .bottom { margin-top: auto; }
.work { flex: 1; min-width: 0; display: flex; flex-direction: column; }

/* toolbar */
.toolbar { height: 43px; flex: none; display: flex; align-items: center; }
.toolbar button { width: 41px; height: 32px; flex: none; justify-content: center; }
.toolbar svg { width: 24px; height: 24px; }
.toolbar .more { width: 22px; }
.toolbar .more svg { width: 14px; height: 10px; }
.toolbar .undo { width: 42px; }
.sep { width: 2px; height: 31px; flex: none; margin: 0 2px; background: #dadada; }
.toolbar .sketch { width: 99px; gap: 4px; justify-content: flex-start; padding-left: 8px; font-size: 17px; }
.var { font: bold 20px/24px "Liberation Serif", serif; }
.gear { position: relative; }
.toolbar .plus { position: absolute; right: 1px; top: -2px; width: 14px; height: 14px; }
.toolbar .search { width: 178px; height: 37px; margin-left: 12px; background: #eee; border-radius: 4px; gap: 1px; color: #444; }
kbd { font: 13px/18px Roboto, sans-serif; padding: 1px 4px; border: 1px solid #aaa; border-radius: 2px; }
.search kbd:first-of-type { margin-left: 6px; }

.stage { flex: 1; display: flex; min-height: 0; }
/* feature list */
.panel { width: 250px; flex: none; border: 1px solid #ccc; border-left: 0; display: flex; flex-direction: column; }
.phead { display: flex; align-items: center; gap: 12px; padding: 8px 25px 0 5px; }
.phead h2 { flex: 1; }
.filter { display: flex; align-items: center; justify-content: space-between; padding: 7px 10px 0 11px; }
.filter input { width: 192px; height: 36px; border: 1px solid #bbb; border-radius: 3px; padding: 0 6px; font: italic 16px Roboto, sans-serif; box-shadow: inset 0 1px 1px #ddd; }
.filter input::placeholder { color: #777; }
.scroller { display: flex; width: 243px; height: 530px; border-bottom: 1px solid #ccc; }
.flist { flex: 1; display: flex; flex-direction: column; }
.peek { width: 19px; height: 3px; margin: 0 0 7px 6px; border-bottom: 1px solid #8aa9dc; }
.flist ul { height: 506px; display: grid; grid-auto-rows: 1fr; }
.flist li { display: flex; align-items: center; gap: 6px; padding-left: 5px; margin: 1px 0; }
.flist li svg { width: 21px; height: 20px; }
.dim { color: #999; }
.dim svg { opacity: .5; }
.used { background: #ebf0f5; border-bottom: 1px solid #82c4e6; }
.current { background: #b0ddf5; font-weight: bold; }
.current .w { fill: #d8eefa; }
.rollback { margin: auto 7px 0 6px; height: 3px; background: #c0c0c0; }
.scrollbar { width: 18px; display: flex; flex-direction: column; align-items: center; background: #f0f0f0; padding: 7px 0; }
.scrollbar i { width: 14px; height: 359px; background: #c1c1c1; margin: auto 0 17px; }
.scrollbar .up { transform: rotate(180deg); }
.parts { padding: 7px 5px; }
.parts h3 { display: flex; align-items: center; gap: 7px; font-weight: normal; }
.parts ul { margin: 6px 0 0 6px; padding-left: 15px; border-left: 1px solid #c4c4c4; position: relative; height: 62px; }
.parts ul::after { content: ""; position: absolute; left: -7px; bottom: 0; width: 13px; height: 1px; background: #c4c4c4; }
.parts li { height: 31px; line-height: 32px; }
.parts .on { font-weight: bold; }

/* graphics area */
.canvas { position: relative; flex: 1; min-width: 0; }
.model { width: 100%; height: 100%; }
.viewcube { position: absolute; top: 3px; right: 0; width: 220px; height: 210px; }
.face { font: 500 40px Roboto, sans-serif; fill: #444; }
.face.bottom { font-size: 32px; }
.axis { font: 44px Roboto, sans-serif; }
.rightdock { position: absolute; right: 0; top: 385px; width: 39px; border: 1px solid #ccc; border-right: 0; background: #fff; }
.rightdock button { position: relative; width: 100%; height: 40px; justify-content: center; border-bottom: 1px solid #ccc; }
.rightdock button:last-child { border: 0; }
.rightdock button > svg { width: 26px; height: 26px; }
.rightdock .var { font-size: 22px; }
.rightdock button > .grid { position: absolute; left: 7px; top: 8px; width: 13px; height: 10px; }
.treebtn { position: absolute; left: -1px; top: 445px; width: 40px; height: 42px; justify-content: center; background: #fff; border: 1px solid #c4c4c4; border-left: 0; }

/* extrude dialog */
.dialog { position: absolute; left: -1px; top: 4px; width: 267px; height: 355px; background: rgba(255, 255, 255, .97); box-shadow: 0 3px 12px rgba(0, 0, 0, .35); }
.dhead { display: flex; height: 35px; background: #fff; border-bottom: 1px solid #d0d4d8; }
.dhead h2 { flex: 1; padding-left: 7px; line-height: 36px; }
.ok, .no { width: 34px; height: 34px; justify-content: center; }
.ok { background: #009400; }
.tabs { display: flex; height: 32px; }
.tabs button { flex: 1; justify-content: center; padding-top: 3px; border-bottom: 1px solid #ccc; }
.tabs .on { flex: none; width: 125px; border-bottom: 2px solid #1651b0; }
.tabs .on, .ops .on { color: #1651b0; font-weight: bold; }
.ops { display: flex; height: 32px; border-bottom: 1px solid #ccc; padding-right: 13px; justify-content: space-between; font-size: 15px; }
.ops .on { width: 57px; height: 31px; flex: none; margin-right: -12px; justify-content: center; border: 3px solid #00f; border-radius: 1px; }
.pick { margin: 5px 4px 0 3px; height: 54px; padding: 6px 13px 0 6px; border: 1px solid #1651b0; border-radius: 2px; background: #d9f0f8; }
.pick small { display: block; font-size: 12px; line-height: 18px; color: #667; white-space: nowrap; }
.pick div { display: flex; align-items: center; justify-content: space-between; padding-left: 2px; line-height: 27px; }
.end { display: flex; height: 37px; gap: 4px; align-items: center; }
.sel { width: 235px; height: 37px; display: flex; align-items: center; border-bottom: 1px solid #d4d4d4; padding: 5px 7px 0 0; }
.sel select { flex: 1; appearance: none; border: 0; background: none; padding: 0 0 0 7px; font: 17px Roboto, sans-serif; color: #333; }
.depth { display: flex; height: 31px; width: 235px; padding-left: 6px; gap: 6px; align-items: flex-end; color: #777; }
.depth label { line-height: 26px; }
.depth input { flex: 1; min-width: 0; height: 26px; border: 0; border-bottom: 1px solid #d4d4d4; background: none; text-align: right; font: 16px Roboto, sans-serif; color: #333; padding: 2px 4px 0; }
.depth + .chk { margin-top: 2px; }
.chk { display: flex; align-items: center; gap: 5px; height: 33px; padding-left: 4px; color: #777; }
.chk input { appearance: none; width: 15px; height: 15px; margin: 0; border: 1px solid #ccc; border-radius: 3px; background: #fff; }
.foot { display: flex; align-items: center; justify-content: space-between; height: 34px; padding: 0 6px 3px 8px; }
.foot input { appearance: none; width: 136px; height: 2px; margin: 3px 0 0; background: #666; }
.foot input::-webkit-slider-thumb { appearance: none; width: 14px; height: 14px; border: 1px solid #666; border-radius: 50%; background: #fff; }

/* document tabs */
.doctabs { height: 36px; flex: none; display: flex; align-items: flex-start; gap: 2px; background: #d0d0d0; }
.add { width: 45px; height: 36px; padding-left: 11px; }
.tab { width: 243px; height: 33px; gap: 5px; padding: 1px 0 0 14px; background: #e8e8e8; border-radius: 0 0 5px 5px; box-shadow: 0 1px 1px #aaa; color: #555; }
.tab svg { width: 22px; height: 24px; }
.tab.on { height: 36px; background: #fff; border-bottom: 3px solid #1651b0; color: #333; }
```
